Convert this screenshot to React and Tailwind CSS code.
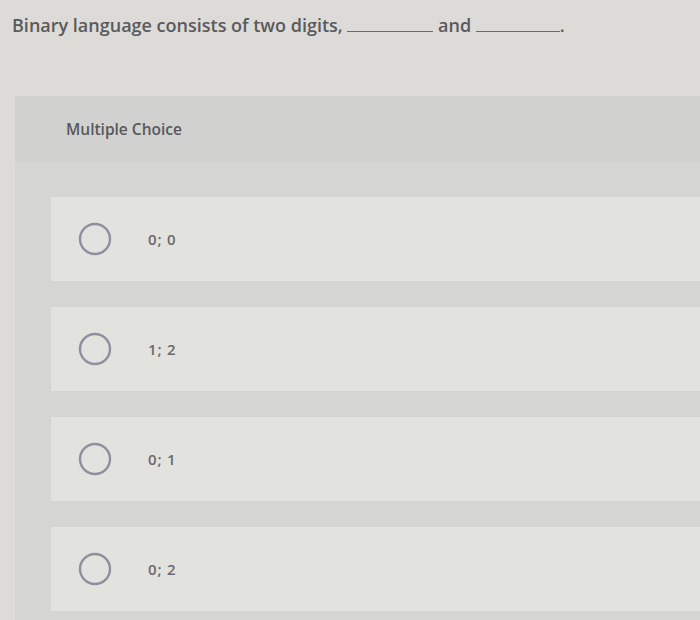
const options = ["0; 0", "1; 2", "0; 1", "0; 2"];

function Radio() {
  return (
    <svg width="34" height="34" viewBox="0 0 34 34" className="shrink-0">
      <circle cx="17" cy="17" r="15" fill="none" stroke="#8f8fa0" strokeWidth="2.4" />
    </svg>
  );
}

export default function App() {
  return (
    <div
      className="w-[700px] h-[620px] overflow-hidden bg-[#dcdbd8] flex flex-col"
      style={{ fontFamily: "'Open Sans', Lato, sans-serif" }}
    >
      {/* question */}
      <div className="h-[96px] pl-[12px] pt-[12px] text-[18px] font-semibold text-[#5a5a5c]">
        Binary language consists of two digits,{" "}
        <span className="inline-block w-[86px] border-b border-[#6a6a6a] align-baseline"></span>{" "}
        and{" "}
        <span className="inline-block w-[84px] border-b border-[#6a6a6a] align-baseline"></span>.
      </div>

      {/* panel */}
      <div className="ml-[15px] flex-1 bg-[#d5d5d2] flex flex-col">
        <div className="h-[66px] bg-[#d1d1cf] pl-[51px] pt-[22px] text-[15.5px] font-semibold text-[#58585e]">
          Multiple Choice
        </div>
        <div className="pt-[35px] pl-[36px] flex flex-col gap-[26px]">
          {options.map((o, i) => (
            <div key={i} className="h-[84px] bg-[#e2e2de] flex items-center pl-[27px]">
              <Radio />
              <span className="ml-[36px] text-[15px] font-semibold text-[#6a6a6c] tracking-[0.8px]">{o}</span>
            </div>
          ))}
        </div>
      </div>
    </div>
  );
}
